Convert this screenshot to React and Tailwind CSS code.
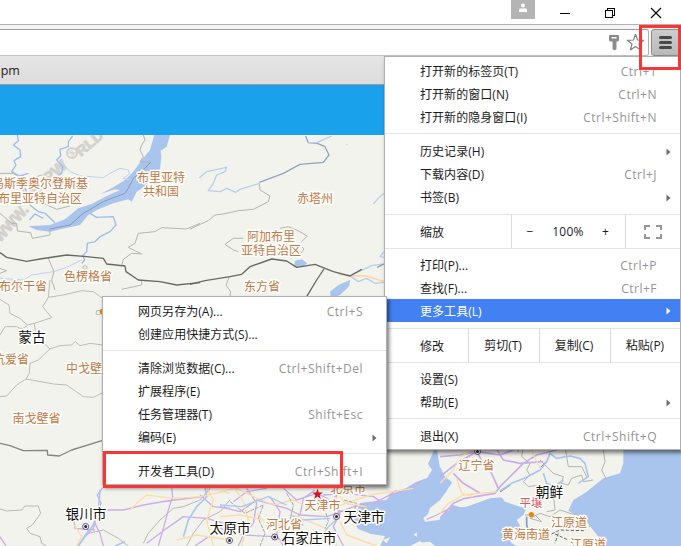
import React from "react";

const UI_FONT = "font-['Open_Sans','Noto_Sans_CJK_SC',sans-serif]";

function Arrow({ active }) {
  return (
    <svg width="5" height="8" viewBox="0 0 5 8" className="block">
      <path d="M0.5 0.5L4.5 4L0.5 7.5Z" fill={active ? "#fff" : "#6e6e6e"} />
    </svg>
  );
}

function Item({ label, keys, sub, active, low }) {
  return (
    <div
      className={`flex h-[23px] items-center justify-between pl-[35px] ${low ? "pt-0.5" : ""} ${
        active ? "bg-[#4281f4] text-white" : "text-[#1b1b1b]"
      } ${sub ? "pr-[9px]" : "pr-[23px]"}`}
    >
      <span className="tracking-[0.05px]">{label}</span>
      {keys && <span className="tracking-[0.5px] text-[#949494]">{keys}</span>}
      {sub && (
        <span className={low ? "-mt-0.5" : ""}>
          <Arrow active={active} />
        </span>
      )}
    </div>
  );
}

function Separator() {
  return <div className="mt-1 mb-1.5 h-px bg-[#e4e4e4]" />;
}

function MainMenu() {
  return (
    <div className="absolute top-14 left-[384px] h-[394px] w-[297px] border border-[#b0b0b0] bg-white pt-[3px] shadow-[2px_3px_4px_rgba(0,0,0,0.5)]">
      <Item label="打开新的标签页(T)" keys="Ctrl+T" />
      <Item label="打开新的窗口(N)" keys="Ctrl+N" />
      <Item label="打开新的隐身窗口(I)" keys="Ctrl+Shift+N" />
      <Separator />
      <Item label="历史记录(H)" sub />
      <Item label="下载内容(D)" keys="Ctrl+J" />
      <Item label="书签(B)" sub />
      <div className="mt-[5px] mb-1 flex h-[35px] items-stretch border-y border-[#e4e4e4] text-[#1b1b1b]">
        <div className="flex w-[126px] items-center pt-[3px] pl-[35px]">缩放</div>
        <div className="flex w-[114px] items-center border-l border-[#dadada]">
          <span className="w-9 text-center">−</span>
          <span className="w-10 text-center tracking-[0.3px]">100%</span>
          <span className="w-[35px] text-center">+</span>
        </div>
        <div className="flex flex-1 items-center justify-center border-l border-[#dadada]">
          <svg width="18" height="14" viewBox="0 0 18 14" fill="none" stroke="#969696" strokeWidth="2">
            <path d="M1 5V1H6M12 1H17V5M17 9V13H12M6 13H1V9" />
          </svg>
        </div>
      </div>
      <Item label="打印(P)..." keys="Ctrl+P" low />
      <Item label="查找(F)..." keys="Ctrl+F" low />
      <Item label="更多工具(L)" sub active low />
      <div className="mt-1.5 mb-[5px] flex h-[35px] items-stretch border-y border-[#e4e4e4] text-[#1b1b1b]">
        <div className="flex w-[83px] items-center pt-0.5 pl-[35px]">修改</div>
        <div className="flex w-[71px] items-center justify-center border-l border-[#dadada] pr-0.5">剪切(T)</div>
        <div className="flex w-[71px] items-center justify-center border-l border-[#dadada] pr-0.5">复制(C)</div>
        <div className="flex flex-1 items-center justify-center border-l border-[#dadada] pr-px">粘贴(P)</div>
      </div>
      <Item label="设置(S)" />
      <Item label="帮助(E)" sub />
      <Separator />
      <Item label="退出(X)" keys="Ctrl+Shift+Q" />
    </div>
  );
}

function ToolsMenu() {
  return (
    <div className="absolute top-[296px] left-[102px] h-[189px] w-[285px] border border-[#b0b0b0] bg-white pt-[3px] shadow-[2px_3px_4px_rgba(0,0,0,0.55)]">
      <Item label="网页另存为(A)..." keys="Ctrl+S" />
      <Item label="创建应用快捷方式(S)..." />
      <Separator />
      <Item label="清除浏览数据(C)..." keys="Ctrl+Shift+Del" />
      <Item label="扩展程序(E)" />
      <Item label="任务管理器(T)" keys="Shift+Esc" />
      <Item label="编码(E)" sub />
      <Separator />
      <Item label="开发者工具(D)" keys="Ctrl+Shift+I" />
    </div>
  );
}

const provinces = [
  ["乌斯季奥尔登斯基", 40, 184],
  ["布里亚特自治区", 40, 198.5],
  ["布里亚特", 161, 178],
  ["共和国", 161, 192],
  ["赤塔州", 315, 199],
  ["阿加布里", 271, 237],
  ["亚特自治区", 271, 251],
  ["色楞格省", 88, 277],
  ["布尔干省", 23, 287],
  ["东方省", 262, 287],
  ["杭爱省", 11, 360],
  ["中戈壁省", 90, 368.5],
  ["南戈壁省", 36.5, 418.5],
  ["北京市", 348, 488.5],
  ["天津市", 322.5, 505.5],
  ["河北省", 284, 525],
  ["辽宁省", 476.5, 465.5],
  ["江原道", 569, 522.5],
  ["黄海南道", 526, 534.5],
  ["江原道", 588, 544.5],
];

const cities = [
  ["蒙古", 32, 337],
  ["银川市", 86, 513.5],
  ["太原市", 230, 527.5],
  ["石家庄市", 309, 538],
  ["天津市", 364, 517],
  ["朝鲜", 549.5, 491.5],
];

const dots = [
  [85.7, 526.5],
  [229.5, 540.5],
  [274.7, 537],
  [336.5, 516.5],
  [477.5, 451.5],
];

function MapView() {
  return (
    <svg
      width="681"
      height="411"
      viewBox="0 135 681 411"
      className="block font-['Noto_Sans_CJK_SC',sans-serif]"
      fill="none"
      strokeLinejoin="round"
    >
      <rect y="135" width="681" height="411" fill="#f3f3ed" />

      <g fill="#d3d2ce" stroke="#d3d2ce" strokeWidth="1" className="font-['Liberation_Sans',sans-serif] font-bold">
        <text transform="translate(0 243) rotate(-48)" fontSize="15" textLength="44" lengthAdjust="spacingAndGlyphs">WWW.</text>
        <text transform="translate(29 201) rotate(-41)" fontSize="15" textLength="52" lengthAdjust="spacingAndGlyphs">MAPW</text>
        <text transform="translate(81 157) rotate(-41)" fontSize="14" textLength="31" lengthAdjust="spacingAndGlyphs">RLD</text>
        <circle cx="72" cy="153" r="5" fill="none" strokeWidth="2" />
        <path d="M67 153H77M72 148V158M68.5 150L75.5 156" strokeWidth="1" />
      </g>

      {/* Lake Baikal, northern rivers and borders */}
      <g transform="translate(0 130) scale(.33333)">
        <path
          fill="#a9c5ee"
          d="M463 15H510L500 50L482 62L484 80L480 118L455 130L440 165L410 185L395 215L385 208L340 220L290 240L265 255L240 285L195 295L150 305L110 300L85 289L150 285L195 268L235 235L275 222L320 198L360 180L345 178L300 193L340 172L375 150L400 125L425 90L450 60Z"
        />
        <g stroke="#9cbcef" strokeWidth="4">
          <path d="M52 15L55 32L40 45L60 60L62 80L42 92L48 105L35 125L60 138L85 130M85 150L70 165L80 185L90 225L115 245L135 250L165 278M88 270L105 252L130 265M270 250L290 262L340 260L348 285L330 305L300 320L285 335L262 340L260 365L248 378L254 390L245 400" />
          <path d="M218 18L205 35L205 50L180 58L182 78L170 90L188 110L185 130L170 142" />
          <path strokeWidth="3" stroke="#bed1ef" d="M188 100L210 125L245 138L310 143L330 130L360 115L385 120L388 132L370 145L400 152M245 390L200 412L160 425L95 435L70 450L0 445" />
        </g>
        <g stroke="#b5b5b1" strokeWidth="3">
          <path d="M0 250L35 280L50 280L52 303L92 308L97 325L150 315L150 297M0 130L40 130L68 150L70 190L45 212L95 215M130 220L170 238L210 228M110 140L125 135M430 15L435 30L425 45L420 60L430 80L420 95L452 97M366 405L370 388L395 370L425 372L385 352L405 340L415 310L465 305L485 293L560 297L600 280M145 385L162 425L155 450L165 480M0 415L20 422L0 430M250 408Q265 405 260 417Q245 420 250 408M365 478L425 465L425 450" />
          <path stroke="#8c98ad" d="M150 297L210 285L250 250L310 215L375 190L385 175L400 145L425 125L452 97" />
        </g>
        <path stroke="#686866" strokeWidth="4" d="M0 368L20 382L80 394L120 387L200 375L260 380L310 385L320 402L375 408L378 425L415 450L480 455L530 465L600 458" />
      </g>

      {/* Eastern steppe */}
      <g transform="translate(190 130) scale(.33333)">
        <g stroke="#b5b5b1" strokeWidth="3">
          <path d="M0 298L15 290L55 272L75 255L100 252L145 242L190 238L235 215L240 198L210 180L208 160M105 343L130 325L160 325M105 343L130 360L145 365M270 295L295 290L320 300L352 318L335 335M335 350L342 357L325 380M118 440L108 465L122 485L120 500" />
          <path stroke="#93a4c0" strokeWidth="4" d="M208 157L280 130L330 103L400 97L417 75L405 50L382 40L355 38L347 18" />
        </g>
        <g stroke="#b8cdef" strokeWidth="4">
          <path d="M28 143L50 125L110 112L105 125L80 135L70 160L55 182L90 185L110 175L138 187L150 178L208 160M355 38L380 38L425 18M582 190L565 205L550 222M470 42V44M582 365L570 380L582 382M582 402L545 407L480 437L505 455L530 445L555 460L582 457" />
        </g>
        <path stroke="#fbd99c" strokeWidth="5" d="M445 432L480 437L530 438L582 455" />
        <path fill="#a9c5ee" d="M315 392L335 388L352 400L338 410H312ZM420 485L445 465L480 450L478 468L450 495L435 500H422Z" />
        <path stroke="#686866" strokeWidth="4" d="M0 463L45 452L120 440L155 433L180 410L245 387L290 393L320 412L375 403L430 425L480 438L515 418M402 417L380 450L350 500" />
        <path stroke="#9d9d9b" strokeWidth="4" d="M562 412L582 402" />
      </g>

      {/* Gobi region */}
      <g transform="translate(0 280) scale(.33333)">
        <g stroke="#bcbcb8" strokeWidth="3">
          <path d="M0 58L27 75L30 100L60 115L82 135L103 130L155 113L128 80L145 52L190 45L245 32L280 35L308 55M145 52L150 0M0 165L15 140L50 140L65 147L82 137M103 130L107 165L150 207L115 240L90 250L88 280L78 297L50 315L20 348L0 350M150 207L180 197L215 195L225 184L240 197L270 190L308 195M78 297L160 312L200 315L250 350L280 352L308 338M308 90L290 92L288 103H300" />
        </g>
        <circle cx="308" cy="95" r="9" fill="#e8870c" />
        <path fill="#cddcf2" d="M20 0H75L60 3H30Z" />
        <path stroke="#858583" strokeWidth="4" d="M0 490L30 497L70 512L142 511L143 525L178 528L215 510L308 481" />
      </g>

      {/* Northern China */}
      <g transform="translate(0 440) scale(.33333)">
        <path stroke="#b9b9b5" strokeWidth="3" d="M0 207L20 213L65 210L75 198H115L122 220L97 255L80 265L90 280L120 290L125 310L140 318M265 280L310 270L355 295L385 318M430 310L445 280L480 240L520 205L550 200L600 180L625 150M560 318L580 280L610 240L660 215L690 180" />
        <g stroke="#cbaee8" strokeWidth="4">
          <path d="M308 143L292 165L303 190L290 230L280 265L255 290L235 318M320 210H370L430 195L500 183L610 170L630 145M515 143L518 170L505 210L490 265L475 318M222 240L225 265L285 270M285 250L300 280L310 318M0 290L18 318M440 310L500 265L550 230L620 235L690 255M600 165L640 200L690 205M585 318L640 280L690 270" />
        </g>
        <g stroke="#a9c9f1" strokeWidth="5">
          <path d="M300 150L297 190L290 225L280 255L260 280L235 318M550 290L565 240L590 200L620 170L615 143M345 318L375 305" />
        </g>
        <path stroke="#fbdcaa" strokeWidth="4" d="M390 210L415 185L440 165L520 175L600 170L670 155L690 160M620 143L640 180L620 240L640 318M220 250L245 290L230 318M530 300L590 285L690 300" />
      </g>

      {/* Bohai Sea and the North China plain */}
      <path fill="#a9c5ee" d="M353 519L357 511L360 503L376 501L386 500L392 494L406 488L416 482L427 478L432 470L428 464L434 450H437L441 474L452 482L446 492L440 500L430 508L426 520L440 513L453 505L463 508L476 512L490 514L511 512L512 522L506 528L512 546H426L420 541L410 546H380L385 536L371 534L358 529Z" />
      <g transform="translate(220 480) scale(.33333)">
        <g stroke="#cbaee8" strokeWidth="4">
          <path d="M0 80L60 95L110 60L200 85L240 105L320 110L350 100L400 80L460 70L500 50L530 30M80 25L110 70L100 130L70 165L55 198M190 25L230 60L290 40L330 60L360 100L340 140L370 198M0 145L70 165L160 170L220 198M235 105L245 155L300 198M285 30L250 55L240 105M310 45L380 40L460 50L490 70M150 50L180 95L170 165L190 198M350 25L340 70L350 120M40 65L80 35L140 25M500 50L580 20L610 0" />
        </g>
        <g stroke="#fbdcaa" strokeWidth="4">
          <path d="M0 35L50 25L100 50L160 75L220 60L290 95L350 80L450 45L580 25M45 25L70 65L85 120L65 198M220 105L270 125L340 155L350 198M110 100L150 145L220 160M360 125L380 165L470 198M350 35L375 70L440 80M0 110L60 105L130 120" />
        </g>
        <path stroke="#aaa9a7" strokeWidth="3" strokeDasharray="12 3" d="M30 65L75 100L130 75L115 115L135 160L120 198M200 40L220 75L210 120L250 135M350 40L345 90L400 100L410 70L370 60M310 70L325 125L315 145" />
        <path stroke="#a9c9f1" strokeWidth="4" d="M0 75L65 80L145 50L200 75M350 118L325 140L300 175L290 198M210 105L250 120L330 115" />
        <path fill="#f3f3ed" d="M610 115L635 92L660 90L650 75L690 35V110L655 120L615 125ZM580 165L590 157L592 170ZM570 198L595 188L630 185L645 198ZM488 180L510 172L500 190Z" />
        <path stroke="#cbaee8" strokeWidth="4" d="M620 118L650 105L690 85" />
      </g>

      {/* Liaodong and the Korean peninsula */}
      <g transform="translate(440 440) scale(.33333)">
        <path fill="#a9c5ee" d="M723 20V318H490L475 290L440 245L385 212L400 180L425 165L440 155L490 115L540 100L550 70V20ZM0 230L35 205L80 200L150 175L185 172L195 185L240 200L260 205L250 225L230 240L245 265L190 270L195 298L230 318H0ZM0 80L20 120L35 130L0 170Z" />
        <g stroke="#b4b4b0" strokeWidth="3">
          <path d="M250 20L245 50L270 70L260 90L270 105L250 125L265 140L300 135M300 60L340 100L370 110L360 150L340 160L345 210L320 215M490 30L495 65L485 90L500 120M375 20L385 80L425 80L440 110M365 130L385 135L395 115L425 105L430 125L460 120M255 225L285 225L305 245L270 235L300 220L330 230L360 210L390 220L430 230" />
          <path strokeDasharray="10 5" stroke="#686866" d="M335 282L360 270L430 272L450 258M345 282L385 300M355 280L345 310" />
          <path stroke="#75736e" strokeWidth="4" d="M180 155L210 135M302 83L320 65" />
        </g>
        <g stroke="#a9c5ee" strokeWidth="5">
          <path d="M180 153L215 130L260 112L300 90L320 65L330 40L350 55L390 48L420 55L435 70L445 110L415 130M310 100L320 130L345 140L370 120M230 20L235 35" />
          <path stroke="#8199c4" d="M260 230L260 255L270 290" />
        </g>
        <g stroke="#cbaee8" strokeWidth="5">
          <path d="M5 230L40 190L75 175L165 160L180 140L220 100L250 70L290 45L350 30M0 50L60 45L110 35L180 45L220 30M40 100L70 130L120 160M0 110L50 70L110 35L130 70L155 100L175 145M165 20L190 60L240 70L310 65" />
        </g>
        <path stroke="#fbdcaa" strokeWidth="4" d="M0 220L25 190L70 165L170 155M0 130L40 90L60 50L100 30M270 20L295 75L305 85M100 170L65 160L50 115" />
      </g>

      <g strokeWidth="3" stroke="#fffffb" textAnchor="middle" className="[paint-order:stroke]">
        {provinces.map(([name, x, y], i) => (
          <text key={i} x={x} y={y + 4.4} fontSize="12" fill="#c27848">{name}</text>
        ))}
        <text x="531" y="506.8" fontSize="11.5" fill="#dd5866">平壤</text>
        {cities.map(([name, x, y], i) => (
          <text key={i} x={x} y={y + 5} fontSize="13.7" fill="#111">{name}</text>
        ))}
      </g>
      {dots.map(([x, y], i) => (
        <g key={i}>
          <circle cx={x} cy={y} r="3" fill="#fff" stroke="#333" strokeWidth=".8" />
          <circle cx={x} cy={y} r="1.5" fill="#27126b" />
        </g>
      ))}
      <circle cx="531.3" cy="514.5" r="2.6" fill="#e8870c" />
      <path fill="#d41728" d="M317.5 488.8L318.9 492.6H322.8L319.7 495L320.8 499L317.5 496.6L314.2 499L315.3 495L312.2 492.6H316.1Z" />
    </svg>
  );
}

function BrowserChrome() {
  return (
    <>
      <div className="flex h-6 items-start justify-end bg-white">
        <div className="flex h-[19px] w-6 justify-center bg-[#b4b4b4]">
          <svg width="10" height="13" viewBox="0 0 10 13" fill="#fff">
            <circle cx="5" cy="5.5" r="2" />
            <path d="M1 12V9.7Q1 8.5 2.5 8.5H7.5Q9 8.5 9 9.7V12Z" />
          </svg>
        </div>
        <svg width="146" height="24" viewBox="535 0 146 24" fill="none" stroke="#000" shapeRendering="crispEdges">
          <path d="M560 13.5H570" />
          <path d="M605.5 10.5H612.5V17.5H605.5ZM607.5 10V8.5H614.5V15.5H613" />
          <path d="M651 8L661 18M661 8L651 18" shapeRendering="auto" strokeWidth="1.1" />
        </svg>
      </div>
      <div className="flex h-8 border-t border-[#b3b3b3] bg-[#f5f5f5] pt-1">
        <div className="flex h-[27px] flex-1 items-center justify-end rounded-r-[3px] border-y border-r border-t-[#9c9c9c] border-r-[#b0b0b0] border-b-[#c4c4c4] bg-white">
          <svg width="42" height="25" viewBox="606 30 42 25">
            <path fill="#8b8b8b" fillRule="evenodd" d="M610 35H618Q619 35 619 36V40Q619 41.5 617 41.5H616.5V49L614.5 50.5L612.5 49V41.5H611Q609 41.5 609 40V36Q609 35 610 35ZM611.5 37V38.5H616.5V37Z" />
            <path fill="none" stroke="#858585" strokeWidth="1.2" strokeLinejoin="round" d="M635.5 34.3L637.6 40L643.7 40.3L639 44L640.6 50L635.5 46.6L630.4 50L632 44L627.3 40.3L633.4 40Z" />
          </svg>
        </div>
        <div className="mr-px ml-0.5 flex h-[27px] w-[29px] flex-col items-center justify-center gap-0.5 rounded-[3px] border border-[#8d8d8d] bg-linear-to-b from-[#cdcdcd] to-[#b9b9b9]">
          <i className="h-[3px] w-[13px] rounded-sm bg-[#484848]" />
          <i className="h-[3px] w-[13px] rounded-sm bg-[#484848]" />
          <i className="h-[3px] w-[13px] rounded-sm bg-[#484848]" />
        </div>
      </div>
      <div className="h-[29px] overflow-hidden border-b border-[#9b9b9b] bg-linear-to-b from-[#e5e5e5] to-[#dcdcdc] text-[#222]">
        <span className="-ml-[7px] block pt-[6px] text-[12.5px] leading-[18px]">npm</span>
      </div>
    </>
  );
}

export default function App() {
  return (
    <div className={`relative h-[546px] w-[681px] overflow-hidden bg-white text-[12px] leading-none ${UI_FONT}`}>
      <BrowserChrome />
      <div className="h-[50px] bg-[#1aa1ec]" />
      <MapView />
      <MainMenu />
      <ToolsMenu />
      <div className="absolute top-[25px] left-[639px] h-[45px] w-[42px] border-3 border-[#fb3436]" />
      <div className="absolute top-[451px] left-[103px] h-[37px] w-[240px] border-3 border-[#fb3436]" />
    </div>
  );
}
